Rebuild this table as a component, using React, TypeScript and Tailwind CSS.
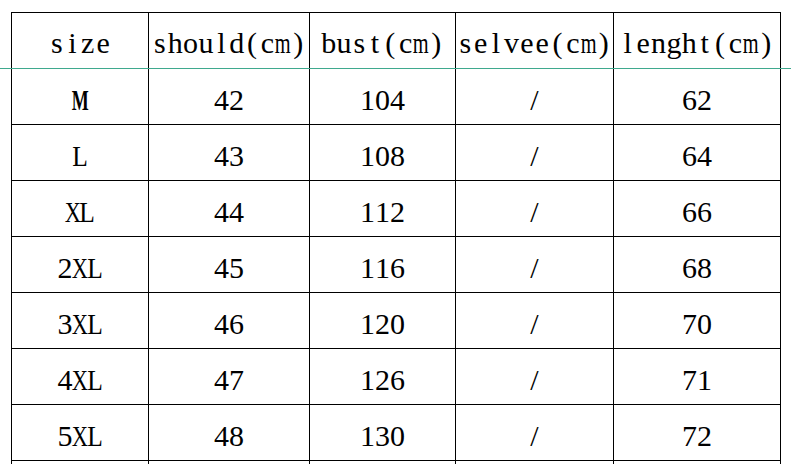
import React from "react";

const headers = ["size", "should(cm)", "bust(cm)", "selvee(cm)", "lenght(cm)"];
const rows = [
  ["M", "42", "104", "/", "62"],
  ["L", "43", "108", "/", "64"],
  ["XL", "44", "112", "/", "66"],
  ["2XL", "45", "116", "/", "68"],
  ["3XL", "46", "120", "/", "70"],
  ["4XL", "47", "126", "/", "71"],
  ["5XL", "48", "130", "/", "72"],
  ["", "", "", "", ""],
];

function Mono({ text, w }: { text: string; w: string }) {
  return (
    <>
      {text.split("").map((ch, k) => (
        <span key={k} className={w + " inline-flex justify-center"}>
          {ch === "m" ? (
            <span className="inline-block scale-x-[0.68]">{ch}</span>
          ) : ch === "M" ? (
            <span className="inline-block scale-x-[0.6] font-bold">{ch}</span>
          ) : ch === "X" ? (
            <span className="inline-block scale-x-[0.75]">{ch}</span>
          ) : ch === "L" ? (
            <span className="inline-block scale-x-[0.85]">{ch}</span>
          ) : (
            ch
          )}
        </span>
      ))}
    </>
  );
}

export default function App() {
  return (
    <div className="relative w-[791px] h-[464px] overflow-hidden bg-white">
      <div className="ml-[11px] mt-[12px] w-fit border-l border-t border-black">
        <div className="grid grid-cols-[137px_161px_146px_158px_167px] auto-rows-[56px]">
          {headers.map((h) => (
            <div
              key={h}
              className="border-r border-b border-black flex justify-center pt-[15px] text-[30px] leading-[30px] text-black whitespace-nowrap"
              style={{ fontFamily: '"Liberation Serif", serif' }}
            >
              <Mono text={h} w="w-[15.4px]" />
            </div>
          ))}
          {rows.map((r, i) =>
            r.map((c, j) => (
              <div
                key={i + "-" + j}
                className="border-r border-b border-black flex justify-center pt-[16px] text-[30px] leading-[30px] text-black whitespace-nowrap"
                style={{ fontFamily: '"Liberation Serif", serif' }}
              >
                <Mono text={c} w="w-[15px]" />
              </div>
            ))
          )}
        </div>
      </div>
      <div className="absolute left-0 top-[68px] w-full h-px bg-[#3fa98e]" />
    </div>
  );
}
